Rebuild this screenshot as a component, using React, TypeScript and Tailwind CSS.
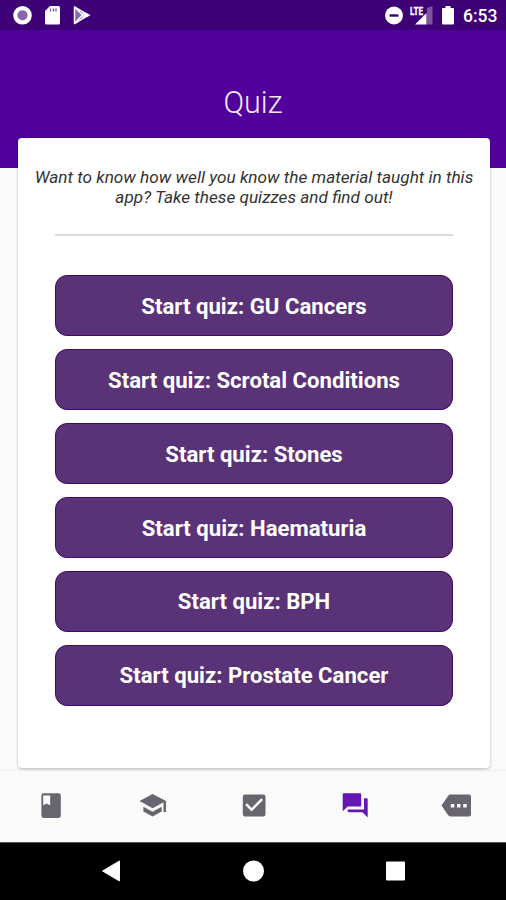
import React from "react";

const quizzes = ["GU Cancers", "Scrotal Conditions", "Stones", "Haematuria", "BPH", "Prostate Cancer"];

const tabs = [
  {
    name: "Learn",
    active: false,
    path: "M7.500 3.300H22.700Q24.800 3.300 24.800 5.400V25.800Q24.800 27.900 22.700 27.900H7.500Q5.400 27.900 5.400 25.800V5.400Q5.400 3.300 7.500 3.300zM7.200 5.500V15.300L10.700 13.400L14.200 15.300V5.500z",
  },
  {
    name: "School",
    active: false,
    path: "M15.600 4L2.600 11.100L15.600 18.200L26.500 12.300V22H29V11.100zM6.400 16.700V21.600L15.600 26.600L24.700 21.600V16.700L15.600 21.700z",
  },
  {
    name: "Checklist",
    active: false,
    path: "M7 4.500H25.400Q27.500 4.500 27.500 6.700V24.300Q27.500 26.500 25.400 26.500H7Q4.800 26.500 4.800 24.300V6.700Q4.800 4.500 7 4.500zM13.600 21.500L25 10L23.300 8.200L13.600 17.900L9 13.300L7.200 15z",
  },
  {
    name: "Quiz",
    active: true,
    path: "M4.700 3.300H21.200Q22.200 3.300 22.200 4.300V15.400Q22.200 16.400 21.200 16.400H8.700L3.700 21.300V4.300Q3.700 3.300 4.700 3.300zM25 8.300H27.400Q28.700 8.300 28.700 9.600V27.500L23.500 22.300H10Q8.700 22.300 8.700 21V19.600H25z",
  },
  {
    name: "More",
    active: false,
    path: "M29 4.600H10.500Q9 4.600 8 5.900L1.500 15.500L8 25.100Q9 26.400 10.500 26.400H29Q31 26.400 31 24.400V6.600Q31 4.600 29 4.600zM10.800 13.900h3.500v3.500h-3.500zM17 13.900h3.500v3.500H17zM23.200 13.900h3.500v3.500h-3.500z",
  },
];

function StatusBar() {
  return (
    <div className="flex h-[30px] shrink-0 items-center bg-[#3d0075] pl-[13px] pr-[9px] text-white">
      <svg width="19" height="30" viewBox="0 0 19 30">
        <circle cx="9.5" cy="15.3" r="7.300" fill="#c9b8dc" stroke="#fff" strokeWidth="4" />
        <circle cx="9.5" cy="15.3" r="4.900" fill="#8a66ad" />
      </svg>
      <svg className="ml-[12px]" width="17" height="30" viewBox="0 0 17 30">
        <path d="M6 6h8.500Q16 6 16 7.500V23Q16 24.500 14.500 24.500H2.500Q1 24.500 1 23V11z" fill="#fff" />
        <path d="M6.500 8.500v3M9.500 8.500v3M12 8.500v3" stroke="#735094" strokeWidth="1.300" />
      </svg>
      <svg className="ml-[12px]" width="18" height="30" viewBox="0 0 18 30">
        <path d="M1.500 7L15.500 15.200L1.500 23.500z" fill="#8b65ae" stroke="#fff" strokeWidth="1.500" strokeLinejoin="round" />
        <path d="M1.500 7L9.500 15L1.500 23.500M10 12.500L16 15.200L10 18z" fill="none" stroke="#fff" strokeWidth="1.400" />
        <path d="M11 12.500L16.500 15.200L11 18z" fill="#fff" />
      </svg>
      <svg className="ml-auto" width="18" height="30" viewBox="0 0 18 30">
        <circle cx="9" cy="15.500" r="9" fill="#fff" />
        <path d="M4.500 15.500h9" stroke="#3d0075" strokeWidth="2.400" />
      </svg>
      <svg className="ml-[7px]" width="23" height="30" viewBox="0 0 23 30">
        <path d="M17 8L22.500 6V24.500H17z" fill="#7e55a3" />
        <path d="M5 24.500L16.500 13V24.500z" fill="#fff" />
        <text x="0" y="14.500" fill="#fff" stroke="#fff" strokeWidth="0.300" fontFamily="Roboto, sans-serif" fontWeight="700" fontSize="10.500" textLength="13" lengthAdjust="spacingAndGlyphs">LTE</text>
      </svg>
      <svg className="ml-[9px]" width="13" height="30" viewBox="0 0 13 30">
        <path d="M3.500 6h5v2H11q1 0 1 1v14.500q0 1-1 1H1q-1 0-1-1V9q0-1 1-1h2.500z" fill="#fff" />
      </svg>
      <span className="ml-[8px] mt-[2px] w-[34px] whitespace-nowrap text-[17.500px] font-medium leading-[28px]">6:53</span>
    </div>
  );
}

export default function App() {
  return (
    <main className="flex h-[900px] w-[506px] flex-col overflow-hidden bg-[#fafafa] font-['Roboto',sans-serif]">
      <header className="flex h-[168px] shrink-0 flex-col bg-[#51009c]">
        <StatusBar />
        <h1 className="mt-[55px] text-center text-[30.500px] font-light leading-[36px] text-[#f3eafa]">Quiz</h1>
      </header>

      <section className="z-10 ml-[18px] mr-[16px] -mt-[30px] flex h-[630px] shrink-0 flex-col rounded-[4px] bg-white shadow-[0_1px_3px_rgba(0,0,0,0.28)]">
        <p className="mt-[29px] whitespace-nowrap text-center text-[17.200px] italic leading-[20px] text-[#333]">
          Want to know how well you know the material taught in this
          <br />
          app? Take these quizzes and find out!
        </p>
        <hr className="mx-[37px] mt-[27px] border-0 border-t-2 border-[#dadada]" />
        <div className="mt-[39.400px] flex flex-col gap-[12.900px] px-[37px]">
          {quizzes.map((quiz) => (
            <button key={quiz} className="h-[61px] rounded-[12px] border border-[#430968] bg-[#593278] pt-px text-[22.150px] font-bold leading-[27px] text-white">
              Start quiz: {quiz}
            </button>
          ))}
        </div>
      </section>

      <nav className="mt-[2px] flex h-[72px] shrink-0 border-t border-[#f0f0f0] pl-px">
        {tabs.map(({ name, path, active }) => (
          <button key={name} aria-label={name} className={active ? "flex flex-1 items-center justify-center text-[#6516b5]" : "flex flex-1 items-center justify-center text-[#69656e]"}>
            <svg width="31" height="30" viewBox="0 0 31 30" className="-mt-[3px]">
              <path d={path} fill="currentColor" fillRule="evenodd" />
            </svg>
          </button>
        ))}
      </nav>

      <footer className="flex h-[58px] shrink-0 items-center justify-center border-t border-[#555] bg-black pb-[2px]">
        <svg width="304" height="22" viewBox="0 0 304 22">
          <path d="M1.500 11L18.500 1V21z" fill="#fff" stroke="#fff" strokeLinejoin="round" />
          <circle cx="152.500" cy="11" r="10.500" fill="#fff" />
          <rect x="285" y="1.500" width="19" height="19" rx="1" fill="#fff" />
        </svg>
      </footer>
    </main>
  );
}
